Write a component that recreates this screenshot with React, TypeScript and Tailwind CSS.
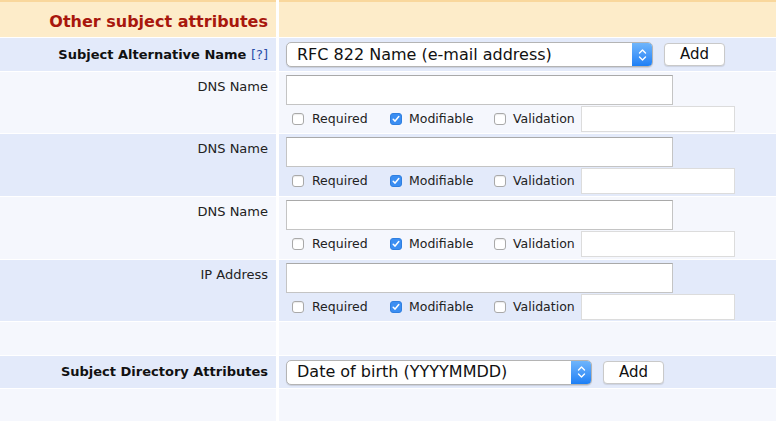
import React from "react";

const labelFont = { fontFamily: '"DejaVu Sans", Verdana, sans-serif' };

function Checkbox({ checked }: { checked?: boolean }) {
  if (checked) {
    return (
      <span className="inline-flex h-[12px] w-[12px] items-center justify-center rounded-[3px] bg-[#3b8ef2] border border-[#2f7fe0]">
        <svg width="8" height="8" viewBox="0 0 8 8">
          <path d="M1.2 4.3 L3.1 6.1 L6.8 1.6" fill="none" stroke="white" strokeWidth="1.5" strokeLinecap="round" strokeLinejoin="round" />
        </svg>
      </span>
    );
  }
  return <span className="inline-block h-[12px] w-[12px] rounded-[3px] border border-[#a9a9a9] bg-white shadow-[inset_0_1px_1px_rgba(0,0,0,0.08)]" />;
}

function Select({ text, width }: { text: string; width: number }) {
  return (
    <div
      className="flex h-[25px] items-stretch rounded-[5px] border border-[#b4b4b4] bg-white shadow-[0_1px_1px_rgba(0,0,0,0.12)]"
      style={{ width }}
    >
      <div className="flex flex-1 items-center pl-[10px] text-[16px] text-[#111]" style={labelFont}>
        {text}
      </div>
      <div className="flex w-[20px] items-center justify-center rounded-r-[4px] bg-gradient-to-b from-[#6fb5fb] to-[#1b7ff5]">
        <svg width="9" height="14" viewBox="0 0 9 14">
          <path d="M1.5 5 L4.5 2 L7.5 5" fill="none" stroke="white" strokeWidth="1.4" strokeLinecap="round" strokeLinejoin="round" />
          <path d="M1.5 9 L4.5 12 L7.5 9" fill="none" stroke="white" strokeWidth="1.4" strokeLinecap="round" strokeLinejoin="round" />
        </svg>
      </div>
    </div>
  );
}

function AddButton() {
  return (
    <div
      className="ml-[11px] flex h-[23px] w-[61px] items-center justify-center rounded-[4px] border border-[#c9c9c9] bg-white text-[15px] text-[#111] shadow-[0_1px_1px_rgba(0,0,0,0.1)]"
      style={labelFont}
    >
      Add
    </div>
  );
}

function FieldRow({ label, blue, h }: { label: string; blue: boolean; h: number }) {
  const bg = blue ? "bg-[#e3eafa]" : "bg-[#f5f7fd]";
  return (
    <>
      <div className={`${bg} flex justify-end pr-[8px] pt-[5px] text-[13px] text-[#222]`} style={{ ...labelFont, height: h }}>
        {label}
      </div>
      <div className={`${bg} pl-[7px] pt-[3px]`} style={{ height: h }}>
        <div className="h-[30px] w-[387px] border border-[#c4c4c4] border-t-[#a9a9a9] bg-white" />
        <div className="mt-[1px] flex h-[26px] items-center text-[12.5px] text-[#222]" style={labelFont}>
          <span className="ml-[6px] flex"><Checkbox /></span>
          <span className="ml-[8px] w-[78px]">Required</span>
          <span className="flex"><Checkbox checked /></span>
          <span className="ml-[7px] w-[85px]">Modifiable</span>
          <span className="flex"><Checkbox /></span>
          <span className="ml-[7px] w-[68px]">Validation</span>
          <div className="h-[26px] w-[154px] border border-[#dcdcdc] bg-white" />
        </div>
      </div>
    </>
  );
}

export default function App() {
  return (
    <div className="h-[421px] w-[776px] overflow-hidden bg-white" style={labelFont}>
      <div className="grid grid-cols-[276px_1fr] gap-x-[3px] gap-y-[1px]">
        <div className="flex h-[37px] items-center justify-end border-t-2 border-[#f9d79c] bg-[#fdecc9] pr-[8px] pt-[5px] text-[16px] font-bold text-[#a8170d]">
          Other subject attributes
        </div>
        <div className="h-[37px] border-t-2 border-[#f9d79c] bg-[#fdecc9]" />

        <div className="flex h-[33px] items-center justify-end bg-[#e3eafa] pr-[8px] text-[13px] font-bold text-[#111]">
          Subject Alternative Name&nbsp;<span className="font-normal text-[#2a4fa8]">[?]</span>
        </div>
        <div className="flex h-[33px] items-center bg-[#e3eafa] pl-[7px]">
          <Select text="RFC 822 Name (e-mail address)" width={367} />
          <AddButton />
        </div>

        <FieldRow label="DNS Name" blue={false} h={61} />
        <FieldRow label="DNS Name" blue={true} h={62} />
        <FieldRow label="DNS Name" blue={false} h={62} />
        <FieldRow label="IP Address" blue={true} h={61} />

        <div className="h-[33px] bg-[#f5f7fd]" />
        <div className="h-[33px] bg-[#f5f7fd]" />

        <div className="flex h-[32px] items-center justify-end bg-[#e3eafa] pr-[8px] text-[13px] font-bold text-[#111]">
          Subject Directory Attributes
        </div>
        <div className="flex h-[32px] items-center bg-[#e3eafa] pl-[7px]">
          <Select text="Date of birth (YYYYMMDD)" width={306} />
          <AddButton />
        </div>

        <div className="h-[40px] bg-[#f5f7fd]" />
        <div className="h-[40px] bg-[#f5f7fd]" />
      </div>
    </div>
  );
}
